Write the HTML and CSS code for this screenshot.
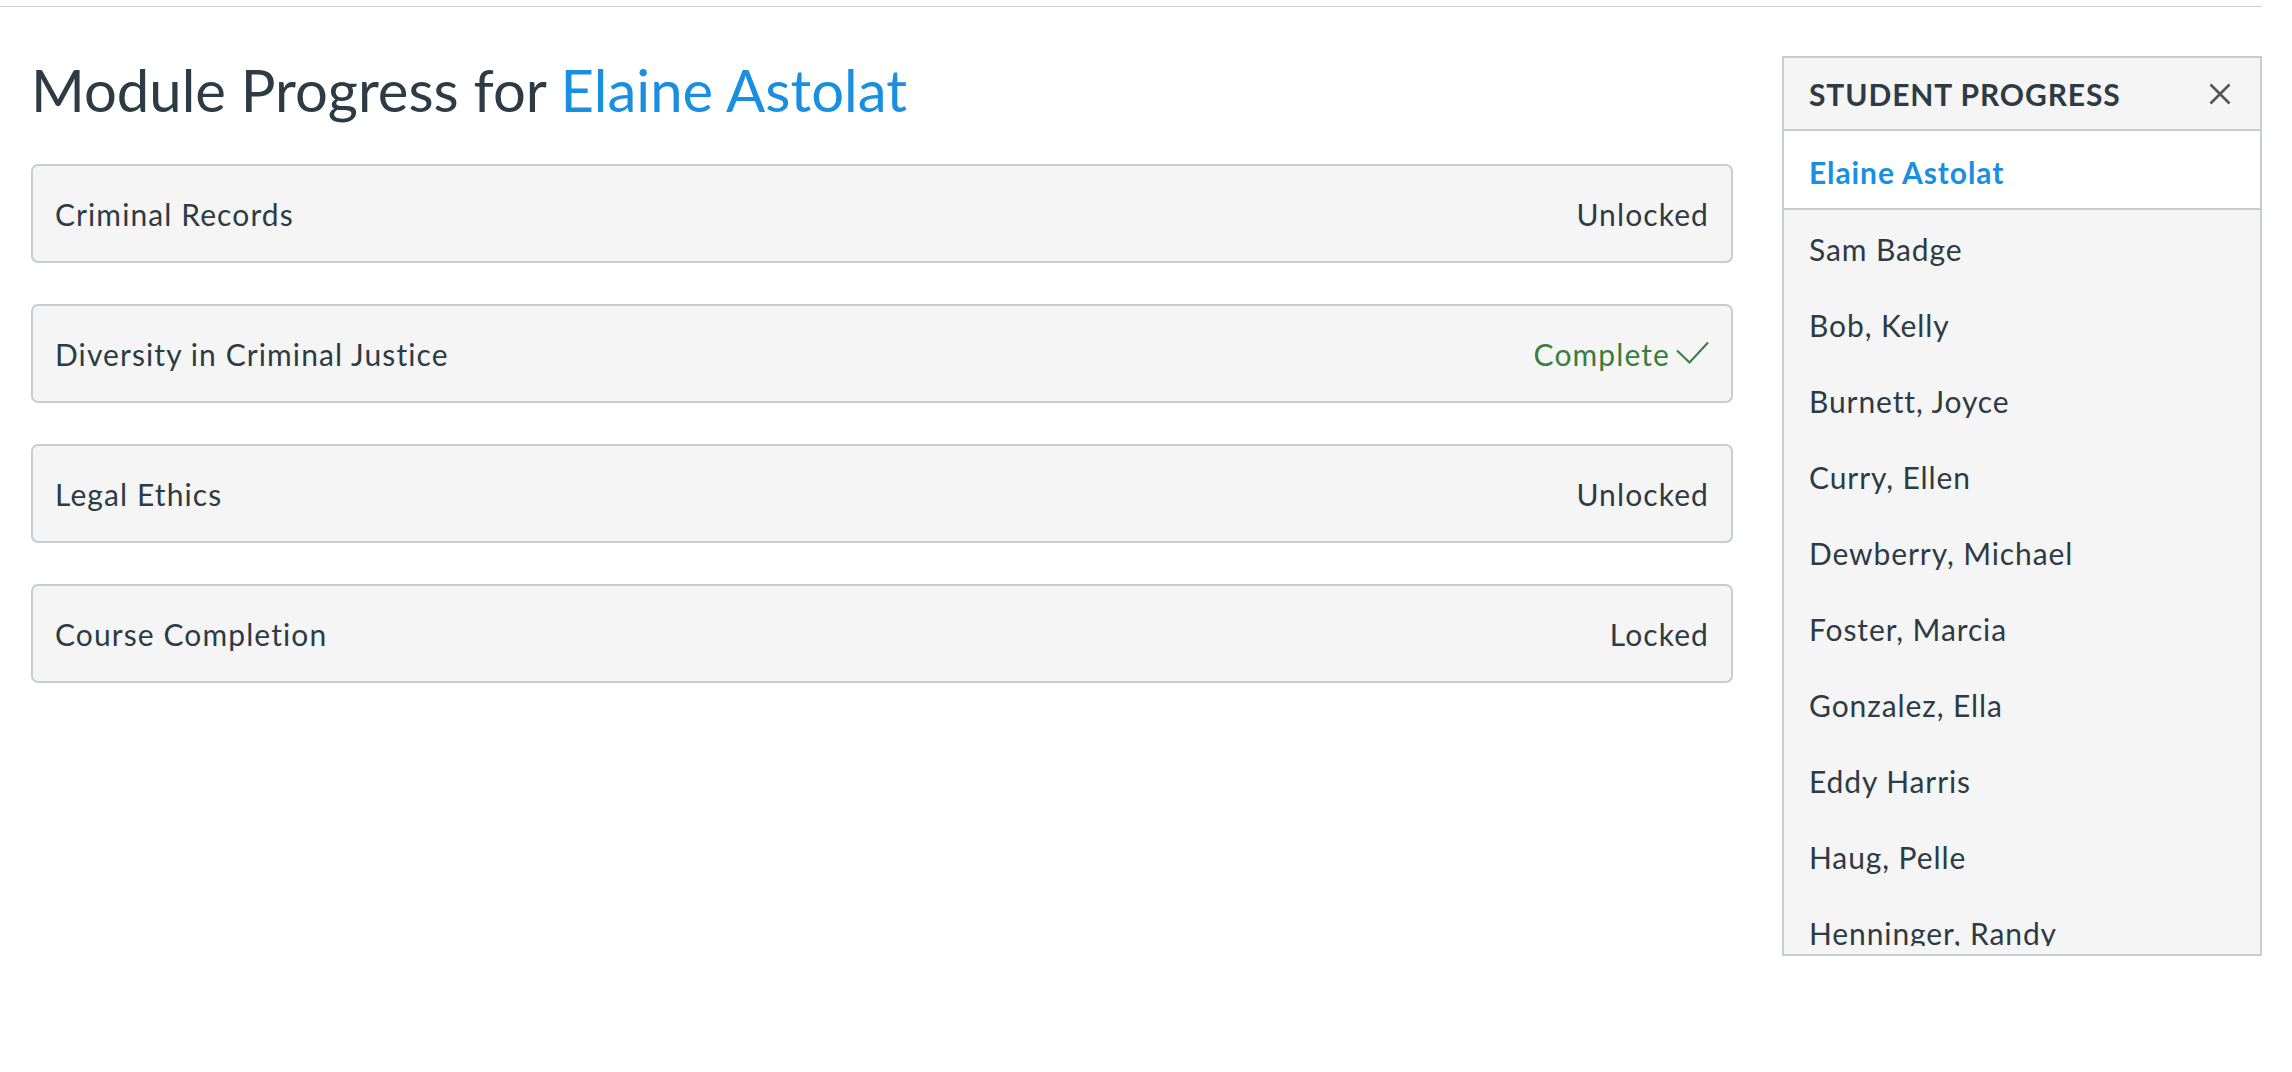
FILE: index.html
```html
<!DOCTYPE html>
<html lang="en">
<head>
<meta charset="utf-8">
<title>Module Progress</title>
<link rel="stylesheet" href="styles.css">
</head>
<body>
  <div class="topbar"></div>
  <div class="page">
    <main class="main">
      <h1 class="title">Module Progress for <a class="title-link" href="#">Elaine Astolat</a></h1>
      <ul class="modules">
        <li class="module"><span class="module-name">Criminal Records</span><span class="status">Unlocked</span></li>
        <li class="module"><span class="module-name">Diversity in Criminal Justice</span><span class="status status-complete">Complete<svg class="check" width="33" height="23" viewBox="0 0 33 23"><polyline points="1,9.5 13.5,21.5 32,1.5" fill="none" stroke="currentColor" stroke-width="2"/></svg></span></li>
        <li class="module"><span class="module-name">Legal Ethics</span><span class="status">Unlocked</span></li>
        <li class="module"><span class="module-name">Course Completion</span><span class="status">Locked</span></li>
      </ul>
    </main>
    <aside class="sidebar">
      <div class="sidebar-header">
        <span class="sidebar-title">STUDENT PROGRESS</span>
        <svg class="close" width="22" height="22" viewBox="0 0 22 22"><path d="M1.5 1.5 L20.5 20.5 M20.5 1.5 L1.5 20.5" stroke="currentColor" stroke-width="2.6" fill="none"/></svg>
      </div>
      <div class="student-list">
        <ul class="students">
          <li class="student student-active">Elaine Astolat</li>
          <li class="student">Sam Badge</li>
          <li class="student">Bob, Kelly</li>
          <li class="student">Burnett, Joyce</li>
          <li class="student">Curry, Ellen</li>
          <li class="student">Dewberry, Michael</li>
          <li class="student">Foster, Marcia</li>
          <li class="student">Gonzalez, Ella</li>
          <li class="student">Eddy Harris</li>
          <li class="student">Haug, Pelle</li>
          <li class="student">Henninger, Randy</li>
        </ul>
      </div>
    </aside>
  </div>
</body>
</html>
```

FILE: styles.css
```css
html, body {
  margin: 0;
  padding: 0;
  background: #ffffff;
}

body {
  font-family: Lato, "Liberation Sans", sans-serif;
  color: #2d3b45;
}

.topbar {
  width: 2262px;
  height: 6px;
  border-bottom: 1px solid #c7cdd1;
}

.page {
  display: flex;
  width: 2262px;
  padding-left: 31px;
  box-sizing: border-box;
  gap: 49px;
  align-items: flex-start;
}

.main {
  flex: 1;
  min-width: 0;
}

.title {
  margin: 48px 0 39px;
  font-size: 58px;
  font-weight: 400;
  line-height: 70px;
  color: #2d3b45;
}

.title-link {
  color: #1a8fe0;
  text-decoration: none;
}

.modules {
  list-style: none;
  margin: 0;
  padding: 0;
  display: flex;
  flex-direction: column;
  gap: 41px;
}

.module {
  display: flex;
  justify-content: space-between;
  align-items: center;
  height: 99px;
  box-sizing: border-box;
  padding: 0 22px 0 22px;
  background: #f5f5f5;
  border: 2px solid #c7cdd1;
  border-radius: 7px;
  font-size: 30px;
  letter-spacing: 1.1px;
}

.status {
  display: flex;
  align-items: center;
}

.status-complete {
  color: #3b7d3c;
}

.check {
  margin-left: 6px;
  margin-top: -2px;
}

.sidebar {
  width: 480px;
  flex: none;
  margin-top: 49px;
  box-sizing: border-box;
  border: 2px solid #c7cdd1;
  background: #f5f5f5;
  padding-bottom: 8px;
}

.sidebar-header {
  display: flex;
  align-items: center;
  justify-content: space-between;
  height: 71px;
  padding: 0 29px 0 25px;
  border-bottom: 2px solid #c7cdd1;
}

.sidebar-title {
  font-size: 30px;
  font-weight: 700;
  letter-spacing: 0.9px;
  color: #2d3b45;
}

.close {
  color: #555555;
  margin-top: 1px;
}

.student-list {
  height: 815px;
  overflow: hidden;
}

.students {
  list-style: none;
  margin: 0;
  padding: 0;
}

.student {
  display: flex;
  align-items: center;
  height: 76px;
  box-sizing: border-box;
  padding: 2px 0 0 25px;
  font-size: 30px;
  letter-spacing: 0.9px;
  color: #2d3b45;
}

.student-active {
  height: 79px;
  padding-top: 5px;
  background: #ffffff;
  border-bottom: 2px solid #c7cdd1;
  color: #1a8fe0;
  font-weight: 700;
}
```
